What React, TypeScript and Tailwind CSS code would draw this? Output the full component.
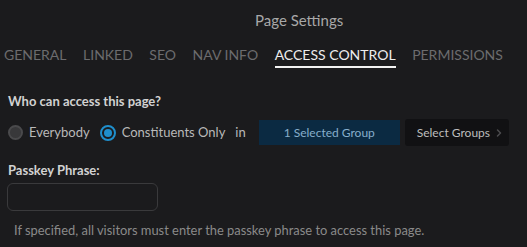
import { ChevronRight } from "lucide-react";

const tabs = ["GENERAL", "LINKED", "SEO", "NAV INFO", "ACCESS CONTROL", "PERMISSIONS"];

function Radio({ checked, label }: { checked?: boolean; label: string }) {
  return (
    <label className="flex shrink-0 items-center gap-[6px] whitespace-nowrap">
      {checked ? (
        <span className="flex h-[16px] w-[16px] shrink-0 items-center justify-center rounded-full border-2 border-[#1f8fcc] bg-[#1b1b1d]">
          <span className="h-[8px] w-[8px] rounded-full bg-[#1f8fcc]" />
        </span>
      ) : (
        <span className="h-[15px] w-[15px] shrink-0 rounded-full border-2 border-[#4a4a4c] bg-[#38383a]" />
      )}
      <span className="text-[13px] text-[#b9b9b9]">{label}</span>
    </label>
  );
}

export default function App() {
  return (
    <div
      className="h-[247px] w-[527px] overflow-hidden bg-[#1b1b1d]"
      style={{ fontFamily: "Lato, 'Open Sans', sans-serif" }}
    >
      <div className="pt-[10px] pl-[255px] text-[15px] leading-[20px] text-[#a8a8a8]">
        Page Settings
      </div>

      <nav className="mt-[17px] flex gap-[16.5px] whitespace-nowrap pl-[4px]">
        {tabs.map((t) => {
          const active = t === "ACCESS CONTROL";
          return (
            <div
              key={t}
              className={
                active
                  ? "border-b-2 border-[#f2f2f2] pb-[3px] text-[14px] leading-[16px] text-[#ededed]"
                  : "pb-[5px] text-[14px] leading-[16px] text-[#6c6c6e]"
              }
            >
              {t}
            </div>
          );
        })}
      </nav>

      <div className="px-[8px]">
        <h3 className="mt-[25px] text-[13px] font-bold leading-[16px] text-[#d2d2d2]">
          Who can access this page?
        </h3>

        <div className="mt-[10px] flex items-center whitespace-nowrap">
          <Radio label="Everybody" />
          <div className="ml-[10px] shrink-0">
            <Radio checked label="Constituents Only" />
          </div>
          <span className="ml-[10px] shrink-0 text-[13px] text-[#b9b9b9]">in</span>
          <div className="ml-[13px] flex h-[25px] w-[141px] shrink-0 items-center justify-center bg-[#0b2a42] text-[12px] text-[#87aecb]">
            1 Selected Group
          </div>
          <button className="ml-[5px] flex h-[27px] w-[104px] shrink-0 items-center gap-[3px] rounded-[3px] bg-[#111113] pl-[12px] text-[12px] text-[#bdbdbd]">
            Select Groups
            <ChevronRight size={12} strokeWidth={3} className="shrink-0 text-[#4c4c4e]" />
          </button>
        </div>

        <h3 className="mt-[16px] text-[13px] font-bold leading-[16px] text-[#d2d2d2]">
          Passkey Phrase:
        </h3>
        <input
          type="text"
          className="mt-[5px] -ml-[1px] block h-[28px] w-[151px] rounded-[6px] border border-[#3a3a3c] bg-transparent outline-none"
        />
        <p className="mt-[12px] whitespace-nowrap pl-[6px] text-[12.9px] leading-[15px] text-[#8a8a8a]">
          If specified, all visitors must enter the passkey phrase to access this page.
        </p>
      </div>
    </div>
  );
}
